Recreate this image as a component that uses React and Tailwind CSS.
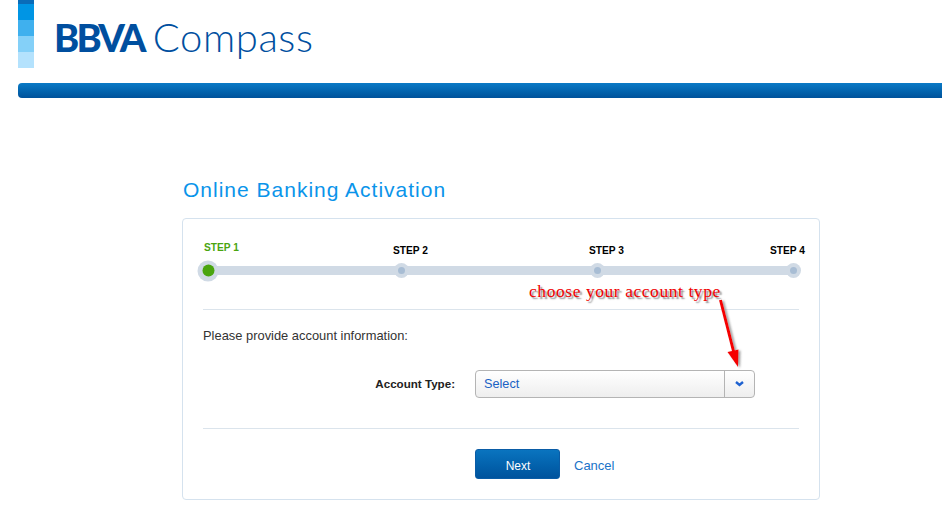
import React from "react";

const sans = "font-['Liberation_Sans',Arial,sans-serif]";

function StepDot({ x }) {
  return (
    <div className="absolute top-[-3px] flex h-[15px] w-[15px] items-center justify-center rounded-full bg-[#d0dae5]" style={{ left: x - 7 }}>
      <div className="h-[7px] w-[7px] rounded-full bg-[#a8bdd4]" />
    </div>
  );
}

export default function App() {
  return (
    <div className={`relative h-[521px] w-[942px] overflow-hidden bg-white ${sans}`}>
      <header className="flex h-[83px] pl-[18px]">
        <div className="flex h-[68px] w-4 flex-col">
          <div className="h-1 bg-[#0a6cb8]" />
          <div className="h-4 bg-[#0095e4]" />
          <div className="h-4 bg-[#3fb0ee]" />
          <div className="h-4 bg-[#84d0f8]" />
          <div className="h-4 bg-[#b4e2fd]" />
        </div>
        <div className="ml-[20px] mt-[13px] flex h-[48px] items-center whitespace-nowrap text-[#004f9f]">
          <span className="font-['Lato',sans-serif] text-[38px] font-black tracking-[-2.8px]">BBVA</span>
          <span className="ml-[9px] font-['Lato',sans-serif] text-[40px] font-light tracking-[0.6px]">Compass</span>
        </div>
      </header>

      <div className="ml-[18px] h-[15px] rounded-l-[4px] bg-gradient-to-b from-[#0a7ac6] to-[#00529b]" />

      <main className="ml-[182px] w-[638px] pt-[78px]">
        <h1 className="h-[42px] whitespace-nowrap pl-px text-[21px] leading-[27px] tracking-[1px] text-[#0a94ea]">Online Banking Activation</h1>
        <section className="h-[282px] rounded-[4px] border border-[#d5e2ee] px-5 pt-[22px]">
          <div className="relative h-[20px] whitespace-nowrap text-[10.2px] font-bold leading-none">
            <span className="absolute left-[1px] top-[2px] text-[#4aa50f]">STEP 1</span>
            <span className="absolute left-[190px] top-[5px] text-black">STEP 2</span>
            <span className="absolute left-[386px] top-[5px] text-black">STEP 3</span>
            <span className="absolute left-[567px] top-[5px] text-black">STEP 4</span>
          </div>
          <div className="relative mx-[5px] mt-[5px] h-[9px] w-[585px] rounded-full bg-[#d0dae5]">
            <div className="absolute left-0 top-1/2 flex h-[21px] w-[21px] -translate-x-1/2 -translate-y-1/2 items-center justify-center rounded-full bg-[#d0dae5]">
              <div className="h-[12px] w-[12px] rounded-full bg-[#4aa50f]" />
            </div>
            <StepDot x={193} />
            <StepDot x={389} />
            <StepDot x={585} />
          </div>

          <div className="mt-[34px] border-t border-[#dbe4ec] pt-[18px] text-[12.9px] leading-[16px] text-[#333]">
            Please provide account information:
          </div>

          <div className="mt-[26px] flex h-[28px] items-center">
            <label className="w-[272px] pr-[20px] text-right text-[11.6px] font-bold text-[#222]">Account Type:</label>
            <div className="flex h-[28px] w-[280px] items-stretch rounded-[4px] border border-[#b4b4b4] bg-gradient-to-b from-white to-[#eeeeee]">
              <div className="flex-1 pl-2 text-[12.7px] leading-[27px] text-[#1a62c4]">Select</div>
              <div className="flex w-[30px] items-center justify-center border-l border-[#b4b4b4]">
                <svg width="9" height="6" viewBox="0 0 9 6">
                  <path d="M1 1 L4.5 4 L8 1" fill="none" stroke="#1f62d0" strokeWidth="2.4" />
                </svg>
              </div>
            </div>
          </div>

          <div className="mt-[30px] flex items-center border-t border-[#dbe4ec] pl-[272px] pt-[20px]">
            <button className="h-[30px] w-[85px] rounded-[3px] border border-[#0a5ca6] bg-gradient-to-b from-[#0a74bf] to-[#00539d] pl-px pt-[4px] text-[12px] text-white">Next</button>
            <a className="ml-[14px] pt-[3px] text-[13px] text-[#1a73c8]">Cancel</a>
          </div>
        </section>
      </main>

      <div
        className="absolute left-[529px] top-[281px] whitespace-nowrap font-['Liberation_Serif',serif] text-[17.5px] leading-[21px] tracking-[0.56px] text-[#f00000] [text-shadow:2px_2px_1.5px_#888]"
      >
        choose your account type
      </div>
      <svg className="absolute left-[715px] top-[295px]" width="34" height="80" viewBox="0 0 34 80">
        <defs>
          <filter id="s" x="-50%" y="-50%" width="200%" height="200%">
            <feDropShadow dx="2" dy="1" stdDeviation="1.2" floodColor="#777" floodOpacity="0.7" />
          </filter>
        </defs>
        <g filter="url(#s)">
          <path d="M5.5 5 L19 58" stroke="#f50000" strokeWidth="3" fill="none" />
          <path d="M12.5 57 L23.5 54.5 L23 72 Z" fill="#f50000" />
        </g>
      </svg>
    </div>
  );
}
